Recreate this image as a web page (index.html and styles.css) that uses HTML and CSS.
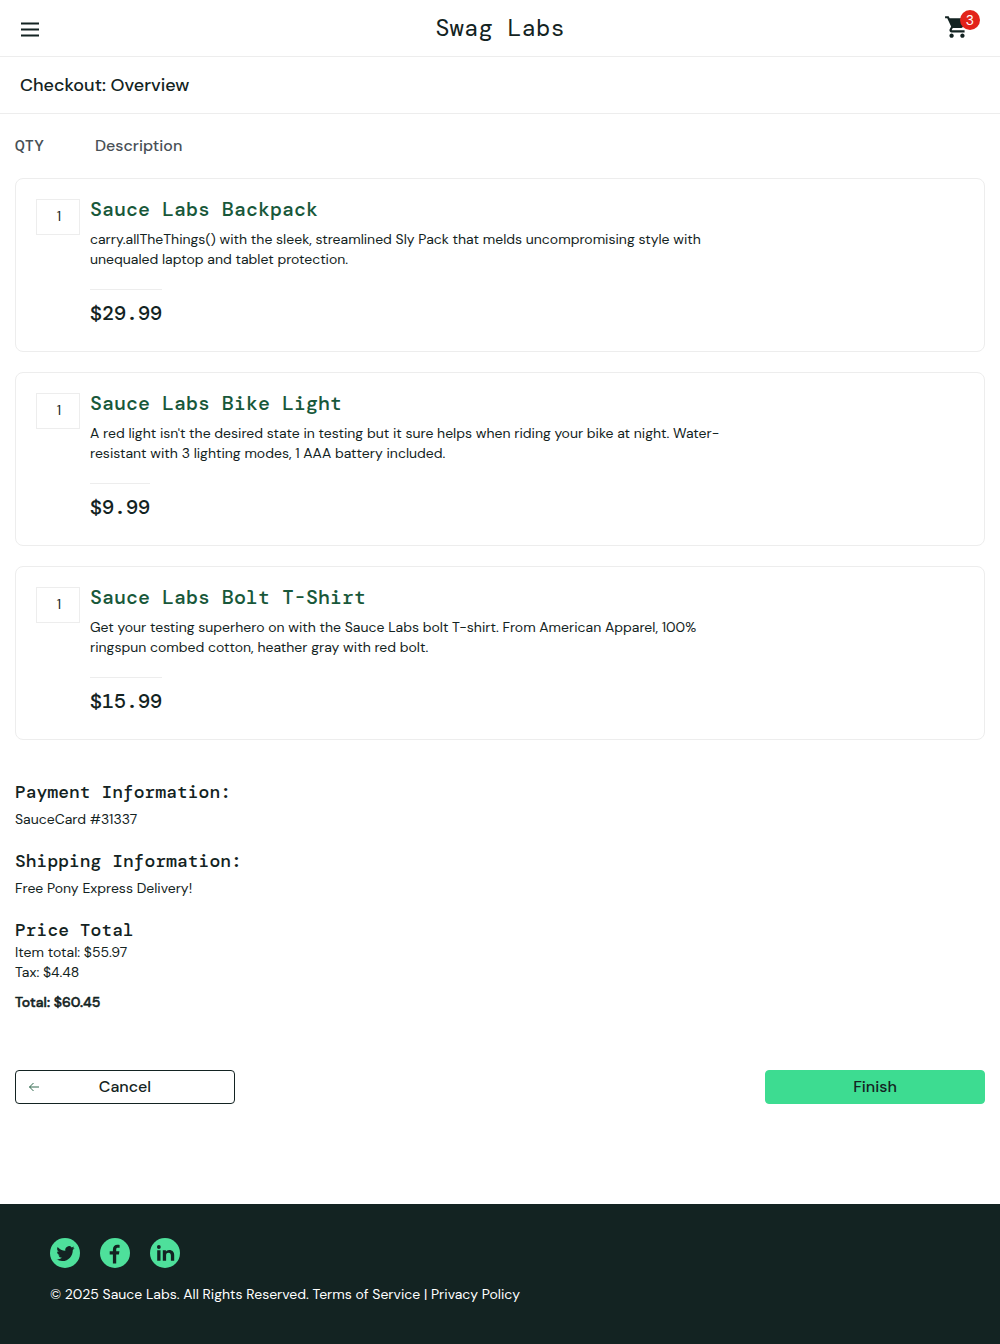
FILE: index.html
```html
<!DOCTYPE html>
<html lang="en">
<head>
<meta charset="utf-8">
<title>Swag Labs</title>
<link rel="stylesheet" href="styles.css">
</head>
<body>
<header class="topbar">
  <svg class="menu" viewBox="0 0 20 20"><path d="M1 3.4h18M1 9.4h18M1 15.4h18" stroke="#132322" stroke-width="2"/></svg>
  <div class="logo">Swag Labs</div>
  <div class="cart">
    <svg class="cart-icon" viewBox="0 0 24 24"><path fill="#132322" d="M7 18c-1.100 0-1.990.9-1.990 2S5.900 22 7 22s2-.9 2-2-.9-2-2-2zM1 2v2h2l3.600 7.590-1.350 2.450c-.160.280-.250.610-.250.960 0 1.100.9 2 2 2h12v-2H7.420c-.140 0-.250-.110-.250-.250l.030-.120.900-1.630h7.450c.750 0 1.410-.410 1.750-1.030l3.580-6.490c.080-.140.120-.310.120-.480 0-.550-.450-1-1-1H5.210l-.940-2H1zm16 16c-1.100 0-1.990.9-1.990 2s.890 2 1.990 2 2-.9 2-2-.9-2-2-2z"/></svg>
    <span class="badge">3</span>
  </div>
</header>
<div class="subheader"><span class="page-title">Checkout: Overview</span></div>
<main class="content">
  <div class="labels"><span class="label-qty">QTY</span><span class="label-desc">Description</span></div>
  <section class="items">
    <article class="item">
      <div class="qty">1</div>
      <div class="details">
        <div class="name">Sauce Labs Backpack</div>
        <p class="desc">carry.allTheThings() with the sleek, streamlined Sly Pack that melds uncompromising style with<br>unequaled laptop and tablet protection.</p>
        <div class="price">$29.99</div>
      </div>
    </article>
    <article class="item">
      <div class="qty">1</div>
      <div class="details">
        <div class="name">Sauce Labs Bike Light</div>
        <p class="desc">A red light isn't the desired state in testing but it sure helps when riding your bike at night. Water-<br>resistant with 3 lighting modes, 1 AAA battery included.</p>
        <div class="price">$9.99</div>
      </div>
    </article>
    <article class="item">
      <div class="qty">1</div>
      <div class="details">
        <div class="name">Sauce Labs Bolt T-Shirt</div>
        <p class="desc">Get your testing superhero on with the Sauce Labs bolt T-shirt. From American Apparel, 100%<br>ringspun combed cotton, heather gray with red bolt.</p>
        <div class="price">$15.99</div>
      </div>
    </article>
  </section>
  <section class="summary">
    <div class="info-label">Payment Information:</div>
    <div class="info-value">SauceCard #31337</div>
    <div class="info-label">Shipping Information:</div>
    <div class="info-value">Free Pony Express Delivery!</div>
    <div class="info-label">Price Total</div>
    <div class="amount">Item total: $55.97</div>
    <div class="amount">Tax: $4.48</div>
    <div class="total">Total: $60.45</div>
  </section>
  <div class="actions">
    <button class="btn cancel"><svg class="back" viewBox="0 0 12 12"><path d="M5.500 2 1.500 6l4 4M1.500 6H11" fill="none" stroke="#18583a" stroke-width=".9"/></svg><span>Cancel</span></button>
    <button class="btn finish"><span>Finish</span></button>
  </div>
</main>
<footer class="footer">
  <div class="social">
    <svg viewBox="0 0 30 30"><circle cx="15" cy="15" r="15" fill="#4ee09b"/><path fill="#132322" transform="translate(6.400 6.500) scale(.76)" d="M23.950 4.570a10 10 0 0 1-2.820.77 4.960 4.960 0 0 0 2.160-2.720c-.95.55-2 .95-3.130 1.180a4.920 4.920 0 0 0-8.380 4.480C7.690 8.090 4.070 6.130 1.640 3.160a4.820 4.820 0 0 0-.67 2.480c0 1.710.87 3.210 2.190 4.100a4.900 4.900 0 0 1-2.230-.62v.06a4.920 4.920 0 0 0 3.950 4.830 5 5 0 0 1-2.210.08 4.940 4.940 0 0 0 4.600 3.420A9.870 9.870 0 0 1 0 19.540a14 14 0 0 0 7.550 2.210c9.050 0 14-7.500 14-13.990 0-.21 0-.42-.02-.63a9.940 9.940 0 0 0 2.420-2.560z"/></svg>
    <svg viewBox="0 0 30 30"><circle cx="15" cy="15" r="15" fill="#4ee09b"/><path fill="#132322" d="M12.900 25.400V16.500H9.700v-3.300h3.200V11.600c0-3.200 1.900-4.900 4.500-4.900.9 0 1.700.1 2.200.2v2.900h-1.700c-1.300 0-1.700.7-1.700 1.600v1.800h3.200l-.5 3.300h-2.700v8.900z"/></svg>
    <svg viewBox="0 0 30 30"><circle cx="15" cy="15" r="15" fill="#4ee09b"/><path fill="#132322" d="M7.200 12.300h3.300v10.500H7.200zM8.850 7.100a1.900 1.900 0 1 1 0 3.800 1.900 1.900 0 0 1 0-3.800zM12.800 12.300h3.100v1.450c.5-.9 1.600-1.750 3.250-1.750 3.400 0 5.050 2.200 5.050 5.100v5.700h-3.300v-5.100c0-1.300-.4-2.900-2.400-2.900s-2.400 1.350-2.400 2.800v5.200h-3.300z"/></svg>
  </div>
  <div class="copy">© 2025 Sauce Labs. All Rights Reserved. Terms of Service | Privacy Policy</div>
</footer>
</body>
</html>
```
FILE: styles.css
```css
* { box-sizing: border-box; }
body { margin: 0; min-height: 1344px; display: flex; flex-direction: column; background: #fff; color: #132322; font: 14px/20px "DM Sans", Inter, "Liberation Sans", sans-serif; }
.topbar { height: 57px; border-bottom: 1px solid #ededed; display: grid; grid-template-columns: 60px 1fr 60px; padding: 0 20px; }
.menu { width: 20px; height: 20px; margin-top: 20px; }
.logo { text-align: center; font: 24px/56px "DM Mono", "Liberation Mono", monospace; }
.cart { position: relative; }
.cart-icon { position: absolute; right: 10px; top: 14px; width: 26px; height: 26px; }
.badge { position: absolute; right: 0; top: 10px; width: 20px; height: 20px; border-radius: 50%; background: #e2231a; color: #fff; text-align: center; line-height: 20px; }
.subheader { height: 57px; border-bottom: 1px solid #ededed; padding-left: 20px; font-size: 18px; font-weight: 500; line-height: 56px; }
.content { padding: 0 15px; flex: 1; }
.labels { height: 64px; display: flex; color: #485056; font-size: 16px; font-weight: 500; line-height: 64px; }
.label-qty { width: 80px; font: 500 16px/64px "DM Mono", "Liberation Mono", monospace; }
.items { display: flex; flex-direction: column; gap: 20px; }
.item { height: 174px; border: 1px solid #ededed; border-radius: 8px; padding: 20px; display: flex; gap: 10px; }
.qty { width: 44px; height: 36px; border: 1px solid #ededed; text-align: center; line-height: 32px; padding-left: 2px; }
.details { display: flex; flex-direction: column; align-items: flex-start; }
.name { color: #18583a; font: 500 20px/20px "DM Mono", "Liberation Mono", monospace; }
.desc { margin: 10px 0 20px; white-space: nowrap; }
.price { border-top: 1px solid #ededed; padding-top: 11px; font: 500 20px/24px "DM Mono", "Liberation Mono", monospace; }
.summary { padding-top: 40px; }
.info-label { font: 500 18px/24px "DM Mono", "Liberation Mono", monospace; }
.info-value { padding: 5px 0 20px; }
.total { margin-top: 10px; font-weight: 500; letter-spacing: .05px; -webkit-text-stroke: .5px; }
.actions { display: flex; justify-content: space-between; margin-top: 58px; }
.btn { width: 220px; height: 34px; border-radius: 4px; padding: 0; position: relative; color: #132322; font: 500 16px/32px "DM Sans", Inter, sans-serif; }
.cancel { background: #fff; border: 1px solid #132322; }
.finish { background: #3ddc91; border: 1px solid #3ddc91; }
.back { position: absolute; left: 11.5px; top: 9.5px; width: 12px; height: 12px; }
.footer { height: 140px; background: #132322; color: #fff; padding: 34px 50px; }
.social { display: flex; gap: 20px; height: 30px; }
.social svg { width: 30px; height: 30px; }
.copy { margin-top: 16px; }
```
